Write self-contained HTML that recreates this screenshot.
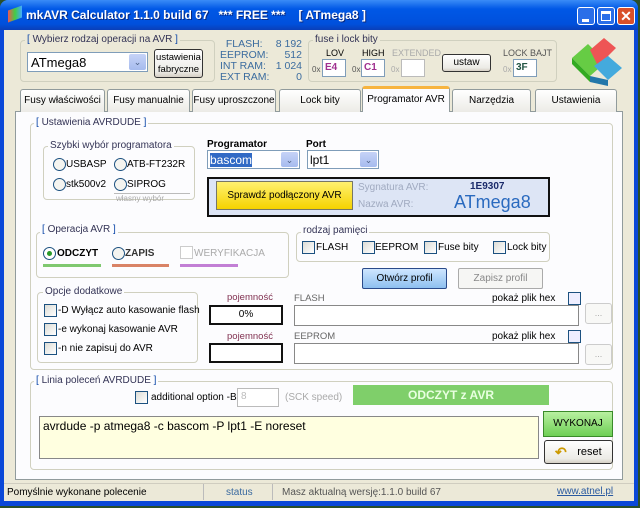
<!DOCTYPE html>
<html><head><meta charset="utf-8"><style>
*{box-sizing:border-box;margin:0;padding:0}
body{width:640px;height:508px;overflow:hidden;background:#2a4f2a;font-family:"Liberation Sans",sans-serif;font-size:10px;color:#000;position:relative}
.a{position:absolute;white-space:nowrap}
.win{left:0;top:0;width:638px;height:506px;background:#0a48d8;border-radius:8px 8px 0 0}
.title{left:0;top:0;width:638px;height:30px;background:linear-gradient(#3a8cf7,#0058e6 30%,#0050dc 80%,#0a3fb8);border-radius:8px 8px 0 0}
.client{left:4px;top:30px;width:630px;height:471px;background:#ece9d8}
.grp{border:1px solid #d0d0bf;border-radius:4px}
.lg{background:#ece9d8;padding:0 2px}
.inp{background:#fff;border:1px solid #7f9db9}
.btn{border:1px solid #003c74;border-radius:3px;background:linear-gradient(#fff,#ecebe6 80%,#d6d0c5);text-align:center}
.tab{border:1px solid #919b9c;border-bottom:none;border-radius:3px 3px 0 0;background:linear-gradient(#fff,#ecebe6);text-align:center;line-height:22px;height:23px}
.cb{width:13px;height:13px;border:1px solid #1c5180;background:linear-gradient(135deg,#dcdcd6,#fff)}
.rd{width:13px;height:13px;border:1px solid #1c5180;border-radius:50%;background:#f4f4f0}
.dd{width:17px;top:1px;right:1px;bottom:1px;background:linear-gradient(#c6d3f7,#a6bbee);border-radius:2px;color:#4d6185;font-size:9px;text-align:center;line-height:16px}
.blue{color:#0b46a8}
</style></head><body>
<div class="a win"></div>
<div class="a title"></div>
<div class="a" style="left:8px;top:8px;width:14px;height:12px;background:linear-gradient(90deg,#e55,#4c4,#4af);transform:skewY(-20deg)"></div>
<div class="a" style="left:26px;top:8px;color:#fff;font-weight:bold;font-size:12px;text-shadow:1px 1px #0a2a80;white-space:pre">mkAVR Calculator 1.1.0 build 67   *** FREE ***    [ ATmega8 ]</div>
<div class="a" style="left:577px;top:7px;width:18px;height:18px;border:1px solid #fff;border-radius:3px;background:#2a6ee8"><div class="a" style="left:4px;top:11px;width:7px;height:3px;background:#fff"></div></div>
<div class="a" style="left:597px;top:7px;width:18px;height:18px;border:1px solid #fff;border-radius:3px;background:#2a6ee8"><div class="a" style="left:3px;top:3px;width:10px;height:10px;border:1px solid #fff;border-top-width:3px"></div></div>
<div class="a" style="left:617px;top:7px;width:18px;height:18px;border:1px solid #fff;border-radius:3px;background:#d9502a;color:#fff;font-weight:bold;font-size:14px;text-align:center;line-height:16px">✕</div>
<div class="a client"></div>

<!-- top group -->
<div class="a grp" style="left:20px;top:40px;width:195px;height:42px"></div>
<div class="a lg blue" style="left:25px;top:34px">[ <span style="color:#335">Wybierz rodzaj operacji na AVR</span> ]</div>
<div class="a inp" style="left:27px;top:52px;width:121px;height:20px;font-size:13px;padding:2px 3px">ATmega8<div class="a dd">⌄</div></div>
<div class="a btn" style="left:154px;top:49px;width:49px;height:29px;line-height:12px;padding-top:2px;border-color:#333;font-size:9.5px">ustawienia<br>fabryczne</div>
<div class="a blue" style="left:220px;top:39px;width:82px;line-height:11px;color:#3b6c9f;font-size:10.5px">
<div>&nbsp;&nbsp;FLASH:<span style="float:right">8 192</span></div>
<div>EEPROM:<span style="float:right">512</span></div>
<div>INT RAM:<span style="float:right">1 024</span></div>
<div>EXT RAM:<span style="float:right">0</span></div></div>

<div class="a grp" style="left:308px;top:40px;width:249px;height:42px"></div>
<div class="a lg" style="left:313px;top:34px;color:#335">fuse i lock bity</div>
<div class="a" style="left:326px;top:48px;font-size:9px">LOV</div>
<div class="a" style="left:362px;top:48px;font-size:9px">HIGH</div>
<div class="a" style="left:392px;top:48px;font-size:9px;color:#aaa">EXTENDED</div>
<div class="a" style="left:503px;top:48px;font-size:9px;color:#555">LOCK BAJT</div>
<div class="a" style="left:312px;top:65px;font-size:8px;color:#555">0x</div>
<div class="a inp" style="left:322px;top:59px;width:24px;height:18px;color:#a03090;font-weight:bold;padding:2px">E4</div>
<div class="a" style="left:352px;top:65px;font-size:8px;color:#555">0x</div>
<div class="a inp" style="left:361px;top:59px;width:24px;height:18px;color:#a03090;font-weight:bold;padding:2px">C1</div>
<div class="a" style="left:391px;top:65px;font-size:8px;color:#aaa">0x</div>
<div class="a inp" style="left:401px;top:59px;width:24px;height:18px;border-color:#bbb"></div>
<div class="a btn" style="left:442px;top:54px;width:49px;height:18px;line-height:16px;border-color:#333">ustaw</div>
<div class="a" style="left:503px;top:65px;font-size:8px;color:#aaa">0x</div>
<div class="a inp" style="left:513px;top:59px;width:24px;height:18px;color:#254;font-weight:bold;padding:2px">3F</div>
<svg class="a" style="left:568px;top:30px" width="60" height="58" viewBox="0 0 60 58">
<polygon points="4,28 20,14 38,32 22,46" fill="#6c4"/>
<polygon points="4,28 22,46 22,52 4,34" fill="#3a2"/>
<polygon points="22,20 36,8 48,18 40,26 46,32 32,40" fill="#e55"/>
<polygon points="26,36 40,26 54,38 40,50" fill="#4ad"/>
<polygon points="22,46 40,50 40,56 22,52" fill="#27a"/>
</svg>

<!-- tabs -->
<div class="a" style="left:15px;top:111px;width:608px;height:369px;background:#fcfcfe;border:1px solid #919b9c"></div>
<div class="a tab" style="left:20px;top:89px;width:85px">Fusy właściwości</div>
<div class="a tab" style="left:107px;top:89px;width:83px">Fusy manualnie</div>
<div class="a tab" style="left:192px;top:89px;width:84px">Fusy uproszczone</div>
<div class="a tab" style="left:279px;top:89px;width:82px">Lock bity</div>
<div class="a tab" style="left:362px;top:86px;width:88px;height:26px;border-top:3px solid #f7b43f;background:#fcfcfe;line-height:22px">Programator AVR</div>
<div class="a tab" style="left:452px;top:89px;width:79px">Narzędzia</div>
<div class="a tab" style="left:535px;top:89px;width:82px">Ustawienia</div>

<!-- AVRDUDE group -->
<div class="a grp" style="left:30px;top:123px;width:583px;height:247px"></div>
<div class="a lg blue" style="left:34px;top:117px;background:#fcfcfe">[ <span style="color:#335">Ustawienia AVRDUDE</span> ]</div>

<div class="a grp" style="left:43px;top:146px;width:152px;height:54px"></div>
<div class="a lg" style="left:48px;top:140px;background:#fcfcfe;color:#335">Szybki wybór programatora</div>
<div class="a rd" style="left:53px;top:158px"></div><div class="a" style="left:66px;top:159px">USBASP</div>
<div class="a rd" style="left:114px;top:158px"></div><div class="a" style="left:127px;top:159px">ATB-FT232R</div>
<div class="a rd" style="left:53px;top:178px"></div><div class="a" style="left:66px;top:179px">stk500v2</div>
<div class="a rd" style="left:114px;top:178px"></div><div class="a" style="left:127px;top:179px">SIPROG</div>
<div class="a" style="left:114px;top:193px;width:76px;border-top:1px solid #bbb;font-size:8px;color:#aaa;padding-left:2px">własny wybór</div>

<div class="a" style="left:207px;top:139px;font-weight:bold">Programator</div>
<div class="a inp" style="left:207px;top:150px;width:93px;height:19px;padding:2px 2px"><span style="background:#316ac5;color:#fff;font-size:12px">bascom</span><div class="a dd">⌄</div></div>
<div class="a" style="left:306px;top:139px;font-weight:bold">Port</div>
<div class="a inp" style="left:307px;top:150px;width:72px;height:19px;padding:2px 2px;font-size:12px">lpt1<div class="a dd">⌄</div></div>

<div class="a" style="left:207px;top:177px;width:343px;height:40px;background:#dde5f5;border:2px solid #111"></div>
<div class="a" style="left:216px;top:181px;width:137px;height:29px;background:linear-gradient(#fff170,#f5d200);border:1px solid #776;line-height:27px;text-align:center">Sprawdź podłączony AVR</div>
<div class="a" style="left:358px;top:182px;color:#a0aac0">Sygnatura AVR:</div>
<div class="a" style="left:358px;top:199px;color:#a0aac0">Nazwa AVR:</div>
<div class="a" style="left:470px;top:181px;font-weight:bold;color:#1a2a6a">1E9307</div>
<div class="a" style="left:454px;top:192px;font-size:18px;color:#2a6abf">ATmega8</div>

<div class="a grp" style="left:36px;top:232px;width:253px;height:46px"></div>
<div class="a lg blue" style="left:40px;top:224px;background:#fcfcfe">[ <span style="color:#335">Operacja AVR</span> ]</div>
<div class="a rd" style="left:43px;top:247px;background:#fff"><div class="a" style="left:3px;top:3px;width:5px;height:5px;border-radius:50%;background:#2a9a2a"></div></div>
<div class="a" style="left:57px;top:248px;font-weight:bold">ODCZYT</div>
<div class="a" style="left:43px;top:264px;width:58px;height:3px;background:#7fc86f"></div>
<div class="a rd" style="left:112px;top:247px"></div><div class="a" style="left:125px;top:248px;font-weight:bold;color:#333">ZAPIS</div>
<div class="a" style="left:112px;top:264px;width:57px;height:3px;background:#d98366"></div>
<div class="a cb" style="left:180px;top:246px;border-color:#ccc;background:#fff"></div><div class="a" style="left:194px;top:248px;color:#aaa">WERYFIKACJA</div>
<div class="a" style="left:180px;top:264px;width:58px;height:3px;background:#c27fd5"></div>

<div class="a grp" style="left:296px;top:232px;width:254px;height:30px"></div>
<div class="a lg" style="left:301px;top:225px;background:#fcfcfe;color:#335">rodzaj pamięci</div>
<div class="a cb" style="left:302px;top:241px"></div><div class="a" style="left:316px;top:242px">FLASH</div>
<div class="a cb" style="left:362px;top:241px"></div><div class="a" style="left:375px;top:242px">EEPROM</div>
<div class="a cb" style="left:424px;top:241px"></div><div class="a" style="left:438px;top:242px">Fuse bity</div>
<div class="a cb" style="left:493px;top:241px"></div><div class="a" style="left:507px;top:242px">Lock bity</div>

<div class="a" style="left:362px;top:268px;width:85px;height:21px;border:1px solid #2a4a8a;border-radius:2px;background:linear-gradient(#cfe6ff,#8ec0f0);text-align:center;line-height:19px">Otwórz profil</div>
<div class="a" style="left:458px;top:268px;width:85px;height:21px;border:1px solid #aaa;border-radius:2px;background:#f6f6f4;text-align:center;line-height:19px;color:#888">Zapisz profil</div>

<div class="a grp" style="left:37px;top:292px;width:161px;height:71px"></div>
<div class="a lg" style="left:43px;top:286px;background:#fcfcfe;color:#335">Opcje dodatkowe</div>
<div class="a cb" style="left:44px;top:304px"></div><div class="a" style="left:58px;top:305px">-D Wyłącz auto kasowanie flash</div>
<div class="a cb" style="left:44px;top:323px"></div><div class="a" style="left:58px;top:324px">-e wykonaj kasowanie AVR</div>
<div class="a cb" style="left:44px;top:342px"></div><div class="a" style="left:58px;top:343px">-n nie zapisuj do AVR</div>

<div class="a" style="left:227px;top:292px;font-size:9.5px;color:#803050">pojemność</div>
<div class="a" style="left:209px;top:305px;width:74px;height:20px;background:#fff;border:2px solid #111;text-align:center;line-height:16px">0%</div>
<div class="a" style="left:227px;top:331px;font-size:9.5px;color:#803050">pojemność</div>
<div class="a" style="left:209px;top:343px;width:74px;height:20px;background:#fff;border:2px solid #111"></div>

<div class="a" style="left:294px;top:293px;color:#666;font-size:9.5px">FLASH</div>
<div class="a" style="left:492px;top:293px">pokaż plik hex</div>
<div class="a cb" style="left:568px;top:292px;background:#eef"></div>
<div class="a inp" style="left:294px;top:305px;width:285px;height:21px;border-color:#888"></div>
<div class="a" style="left:585px;top:303px;width:27px;height:21px;border:1px solid #ccc;border-radius:3px;background:#f8f8f6;color:#aaa;text-align:center;font-size:9px;line-height:18px">...</div>
<div class="a" style="left:294px;top:331px;color:#666;font-size:9.5px">EEPROM</div>
<div class="a" style="left:492px;top:331px">pokaż plik hex</div>
<div class="a cb" style="left:568px;top:330px;background:#eef"></div>
<div class="a inp" style="left:294px;top:343px;width:285px;height:21px;border-color:#888"></div>
<div class="a" style="left:585px;top:344px;width:27px;height:21px;border:1px solid #ccc;border-radius:3px;background:#f8f8f6;color:#aaa;text-align:center;font-size:9px;line-height:18px">...</div>

<!-- Linia poleceń -->
<div class="a grp" style="left:30px;top:381px;width:583px;height:89px"></div>
<div class="a lg blue" style="left:34px;top:375px;background:#fcfcfe">[ <span style="color:#335">Linia poleceń AVRDUDE</span> ]</div>
<div class="a cb" style="left:135px;top:391px"></div>
<div class="a" style="left:151px;top:392px">additional option -B</div>
<div class="a" style="left:237px;top:388px;width:42px;height:19px;background:#fff;border:1px solid #bbb;color:#bbb;padding:2px 3px;font-size:10px">8</div>
<div class="a" style="left:285px;top:392px;color:#aaa">(SCK speed)</div>
<div class="a" style="left:353px;top:385px;width:196px;height:20px;background:#7fcf6a;color:#e8ffe0;font-weight:bold;text-align:center;line-height:20px;font-size:12px">ODCZYT z AVR</div>
<div class="a" style="left:39px;top:416px;width:500px;height:43px;background:#ffffe0;border:1px solid #888;padding:2px 3px;font-size:12px">avrdude -p atmega8 -c bascom -P lpt1 -E noreset</div>
<div class="a" style="left:543px;top:411px;width:70px;height:26px;background:linear-gradient(#b8f0a0,#6ecf55);border:1px solid #3a8a2a;text-align:center;line-height:24px;font-size:10px">WYKONAJ</div>
<div class="a btn" style="left:544px;top:440px;width:69px;height:24px;border-color:#333;line-height:22px;padding-left:22px;font-size:11px">reset</div>
<div class="a" style="left:555px;top:444px;font-size:14px;color:#c90;font-weight:bold">↶</div>

<!-- status -->
<div class="a" style="left:4px;top:483px;width:630px;height:18px;background:#ece9d8;border-top:1px solid #d0cdc0"></div>
<div class="a" style="left:7px;top:487px;font-size:10px">Pomyślnie wykonane polecenie</div>
<div class="a" style="left:203px;top:484px;width:1px;height:16px;background:#bbb"></div>
<div class="a" style="left:226px;top:487px;font-size:10px;color:#3a6aa0">status</div>
<div class="a" style="left:272px;top:484px;width:1px;height:16px;background:#bbb"></div>
<div class="a" style="left:282px;top:487px;font-size:10px;color:#555">Masz aktualną wersję:1.1.0 build 67</div>
<div class="a" style="left:557px;top:486px;font-size:10px;color:#2a5aa0;text-decoration:underline">www.atnel.pl</div>
</body></html>
